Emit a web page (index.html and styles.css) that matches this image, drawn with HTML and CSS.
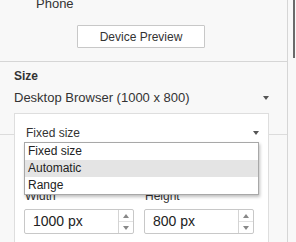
FILE: index.html
```html
<!DOCTYPE html>
<html lang="en">
<head>
  <meta charset="UTF-8" />
  <title>Dashboard Size</title>
  <link rel="stylesheet" href="styles.css">
</head>
<body>
  <div class="shell">
    <aside class="panel">
      <section class="device">
        <div class="phone">Phone</div>
        <button class="preview">Device Preview</button>
      </section>

      <section class="size">
        <h3>Size</h3>
        <div class="select main">
          <span>Desktop Browser (1000 x 800)</span>
          <span class="caret"></span>
        </div>
        <div class="rule"></div>

        <div class="popover">
          <div class="select">
            <span>Fixed size</span>
            <span class="caret"></span>
          </div>
          <ul class="options">
            <li>Fixed size</li>
            <li class="active">Automatic</li>
            <li>Range</li>
          </ul>
          <div class="dims">
            <label>Width</label>
            <label>Height</label>
            <div class="spin">
              <span class="value">1000 px</span>
              <span class="arrows"><i class="up"></i><i class="down"></i></span>
            </div>
            <div class="spin">
              <span class="value">800 px</span>
              <span class="arrows"><i class="up"></i><i class="down"></i></span>
            </div>
          </div>
        </div>
      </section>
    </aside>
    <div class="gutter"><div class="thumb"></div></div>
  </div>
</body>
</html>
```

FILE: styles.css
```css
body {
  margin: 0;
  font-family: "Liberation Sans", Arial, sans-serif;
  color: #333;
  background: #f8f8f8;
  overflow: hidden;
}
.shell {
  display: flex;
  height: 242px;
}
.panel {
  width: 287px;
  border-right: 1px solid #d6d6d6;
  background: #f8f8f8;
}
.gutter {
  flex: 1;
  display: flex;
  justify-content: flex-end;
  padding-right: 1px;
}
.thumb {
  width: 2px;
  height: 58px;
  background: #6a6a6a;
}

.device {
  border-bottom: 1px solid #d6d6d6;
  padding: 0 0 13px 36px;
}
.phone {
  font-size: 13px;
  line-height: 16px;
  margin-top: -4px;
}
.preview {
  display: block;
  margin: 13px 0 0 41px;
  width: 128px;
  height: 23px;
  padding: 0;
  background: #fff;
  border: 1px solid #c8c8c8;
  border-radius: 1px;
  font-family: inherit;
  font-size: 12px;
  color: #333;
}

.size {
  position: relative;
  padding: 7px 18px 0 14px;
  height: 173px;
}
.size h3 {
  margin: 0;
  font-size: 12px;
  line-height: 14px;
  font-weight: bold;
}
.select {
  display: flex;
  justify-content: space-between;
  align-items: center;
}
.select.main {
  margin-top: 7px;
  font-size: 13px;
  line-height: 16px;
}
.caret {
  width: 0;
  height: 0;
  border-left: 3.5px solid transparent;
  border-right: 3.5px solid transparent;
  border-top: 4px solid #555;
}
.rule {
  margin: 0 -18px 0 -14px;
  height: 28px;
  border-bottom: 1px solid #dcdcdc;
}

.popover {
  position: absolute;
  top: 51px;
  left: 14px;
  width: 235px;
  height: 117px;
  padding: 12px 9px 0;
  background: #fff;
  border: 1px solid #dedede;
  border-bottom: 0;
}
.popover .select {
  padding-left: 2px;
  font-size: 12px;
  line-height: 14px;
}
.options {
  position: absolute;
  top: 28px;
  left: 9px;
  width: 233px;
  margin: 0;
  padding: 0;
  list-style: none;
  background: #fff;
  border: 1px solid #a8a8a8;
  box-shadow: 1px 2px 3px rgba(0, 0, 0, 0.25);
  z-index: 2;
}
.options li {
  height: 17px;
  line-height: 17px;
  padding-left: 3px;
  font-size: 12px;
  color: #222;
}
.options li.active {
  background: #e4e4e4;
}

.dims {
  display: grid;
  grid-template-columns: 110px 110px;
  column-gap: 10px;
  row-gap: 6px;
  margin-top: 49px;
}
.dims label {
  font-size: 12px;
  line-height: 14px;
  padding-left: 1px;
}
.spin {
  display: flex;
  height: 23px;
  border: 1px solid #c8c8c8;
  border-radius: 2px;
  background: #fff;
}
.spin .value {
  flex: 1;
  padding-left: 8px;
  font-size: 14px;
  line-height: 23px;
  color: #222;
}
.arrows {
  width: 14px;
  display: flex;
  flex-direction: column;
  border-left: 1px solid #d4d4d4;
}
.arrows i {
  flex: 1;
  display: flex;
  align-items: center;
  justify-content: center;
}
.arrows i.up {
  border-bottom: 1px solid #e2e2e2;
}
.arrows i::after {
  content: "";
  width: 0;
  height: 0;
  border-left: 3px solid transparent;
  border-right: 3px solid transparent;
}
.arrows i.up::after {
  border-bottom: 4px solid #888;
}
.arrows i.down::after {
  border-top: 4px solid #888;
}
```
